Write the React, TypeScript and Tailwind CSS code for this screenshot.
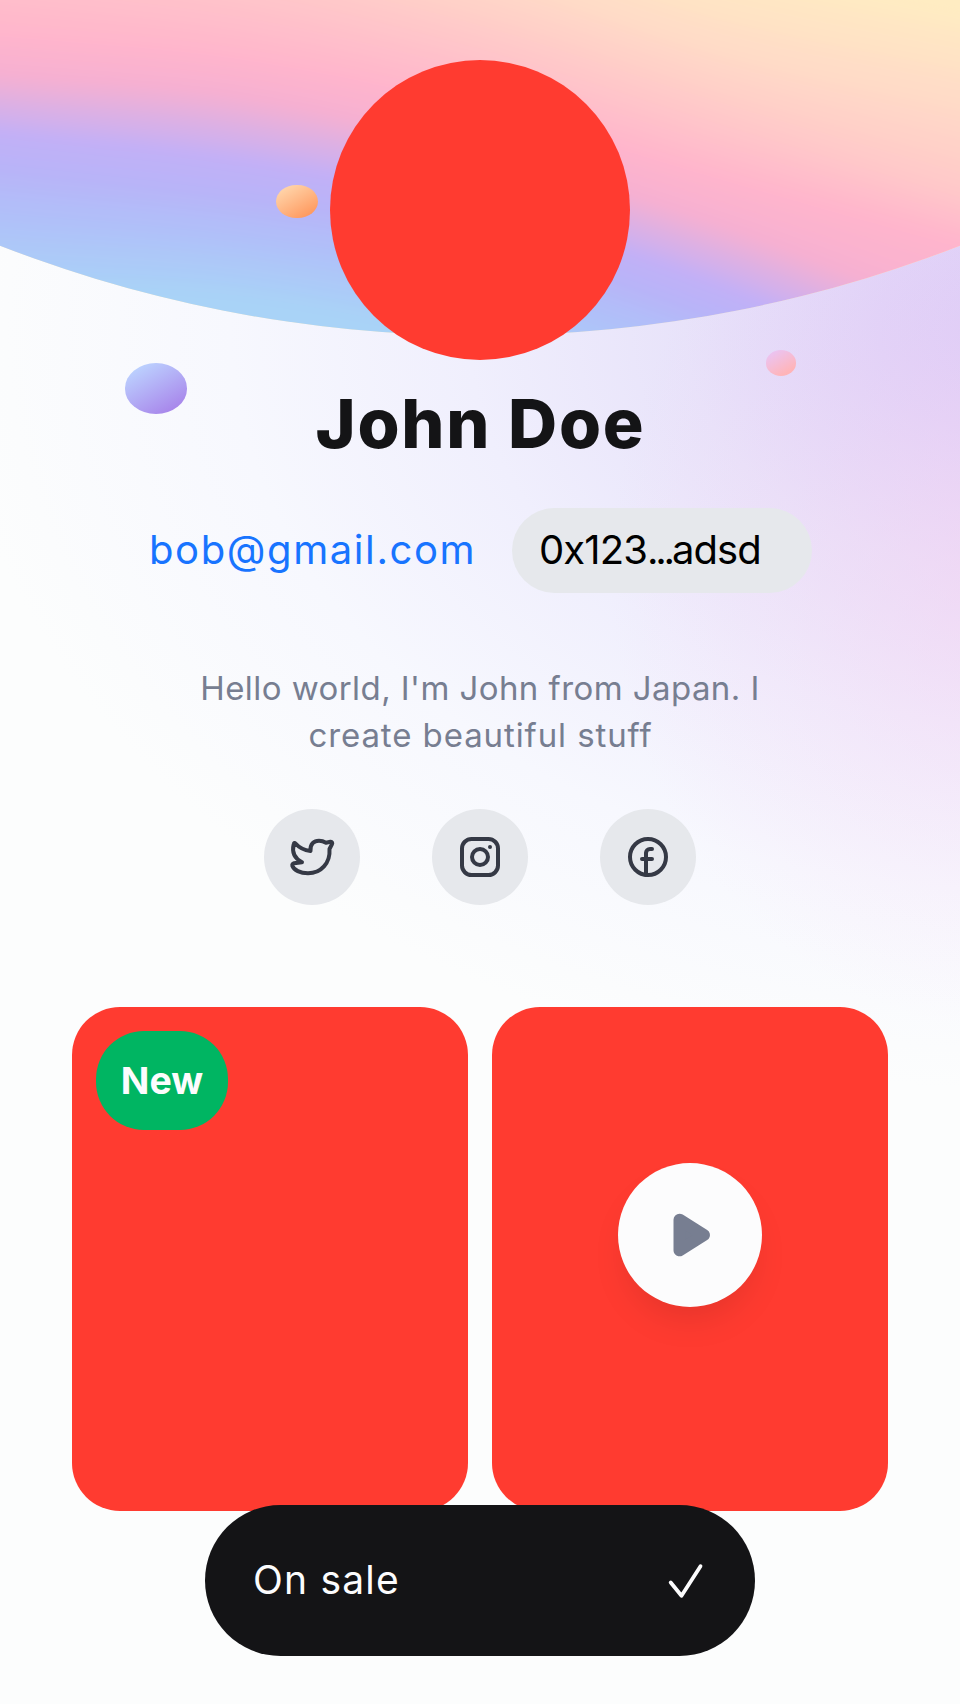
import React from "react";

type Band = { color: [number, number, number]; ys: number[] };

// Height of each colour contour at x = 0, 240, 480, 720 and 960.
const bands: Band[] = [
  { color: [255, 236, 194], ys: [-200, -160, -110, -45, 5] },
  { color: [255, 220, 199], ys: [-120, -85, -35, 42, 92] },
  { color: [255, 200, 201], ys: [-58, -22, 38, 115, 190] },
  { color: [255, 181, 204], ys: [33, 56, 105, 175, 240] },
  { color: [246, 176, 209], ys: [72, 94, 148, 222, 315] },
  { color: [194, 176, 247], ys: [132, 160, 207, 285, 390] },
  { color: [184, 180, 248], ys: [168, 196, 238, 317, 425] },
  { color: [176, 192, 249], ys: [213, 236, 278, 355, 460] },
  { color: [168, 212, 247], ys: [290, 302, 352, 435, 545] },
];

function contour(ys: number[]): string {
  const xs = [0, 240, 480, 720, 960];
  const slope = (i: number) => {
    const a = Math.max(0, i - 1);
    const b = Math.min(4, i + 1);
    return (ys[b] - ys[a]) / (xs[b] - xs[a]);
  };
  let d = `M-60 ${ys[0] - 60 * slope(0)} L0 ${ys[0]}`;
  for (let i = 0; i < 4; i++) {
    d += ` C${xs[i] + 80} ${ys[i] + 80 * slope(i)} ${xs[i + 1] - 80} ${ys[i + 1] - 80 * slope(i + 1)} ${xs[i + 1]} ${ys[i + 1]}`;
  }
  return `${d} L1020 ${ys[4] + 60 * slope(4)} V700 H-60 Z`;
}

const STEPS = 14;
const layers = bands.slice(0, -1).flatMap((band, i) => {
  const next = bands[i + 1];
  return Array.from({ length: STEPS }, (_, k) => {
    const t = k / STEPS;
    const rgb = band.color.map((c, j) => Math.round(c + (next.color[j] - c) * t));
    return {
      fill: `rgb(${rgb.join(",")})`,
      d: contour(band.ys.map((y, j) => y + (next.ys[j] - y) * t)),
    };
  });
});

function HeaderArt() {
  return (
    <svg className="absolute inset-x-0 top-0" width="960" height="340" viewBox="0 0 960 340" aria-hidden="true">
      <defs>
        <clipPath id="dome">
          <circle cx="480" cy="-989.3" r="1325" />
        </clipPath>
        <filter id="soften" x="-5%" y="-5%" width="110%" height="110%">
          <feGaussianBlur stdDeviation="5" />
        </filter>
      </defs>
      <g clipPath="url(#dome)">
        <rect width="960" height="340" fill="#ffecc2" />
        <g filter="url(#soften)">
          {layers.map((layer, i) => (
            <path key={i} d={layer.d} fill={layer.fill} />
          ))}
        </g>
      </g>
    </svg>
  );
}

function TwitterIcon() {
  return (
    <path d="M-16.5 -13.5C-13 -9.5 -8 -6.8 -1.5 -6C-2 -13 2 -16.3 7 -16.3C10 -16.3 12 -15.5 14 -14.3L18.5 -15.2C20 -15.4 20.6 -14 20 -12.8L17.5 -8C18.5 6 9 16.3 -4 16.3C-12 16.3 -18 13 -19.6 9C-20 7.5 -19.2 6.6 -18 6.3L-10 5.2C-18 1 -20 -6 -18.3 -12.8C-18 -14.3 -17.3 -14.4 -16.5 -13.5Z" />
  );
}

function InstagramIcon() {
  return (
    <>
      <rect x="-18" y="-18" width="36" height="36" rx="9.5" />
      <circle r="8" />
      <circle cx="10" cy="-10" r="2" fill="#353945" stroke="none" />
    </>
  );
}

function FacebookIcon() {
  return (
    <>
      <circle r="18" />
      <path d="M-2 18V-4A4 4 0 0 1 2 -8H4M-6 2H4" />
    </>
  );
}

function Social({ label, children }: { label: string; children: React.ReactNode }) {
  return (
    <button aria-label={label} className="flex size-24 items-center justify-center rounded-full bg-[#e6e8ec]">
      <svg width="48" height="48" viewBox="-24 -24 48 48" fill="none" stroke="#353945" strokeWidth="4" strokeLinecap="round" strokeLinejoin="round">
        {children}
      </svg>
    </button>
  );
}

export default function App() {
  return (
    <main
      className="relative h-[1704px] w-[960px] overflow-hidden bg-[#fcfdfd] bg-[radial-gradient(400px_460px_at_1010px_570px,rgba(246,206,240,0.55),rgba(246,206,240,0.22)_55%,rgba(246,206,240,0)),radial-gradient(1080px_760px_at_1030px_330px,#d8caf8_0%,#ded3f9_14%,#e8e3fa_32%,#f0effd_52%,#f7f8fe_74%,rgba(252,253,253,0)_100%)] font-['Inter',sans-serif]"
    >
      <HeaderArt />
      <i className="absolute top-[184.5px] left-[276px] h-[33.5px] w-[41.5px] rounded-[50%] bg-linear-150 from-[#ffd6ac] from-10% to-[#ff965a] to-90%" />
      <i className="absolute top-[363px] left-[125px] h-[50.5px] w-[62px] rounded-[50%] bg-linear-150 from-[#bcd4ff] from-10% to-[#a57de8] to-95%" />
      <i className="absolute top-[350px] left-[765.5px] h-[25.5px] w-[30.5px] rounded-[50%] bg-linear-150 from-[#eac4f4] from-10% to-[#ffb4b8] to-80%" />

      <div className="relative flex flex-col items-center pt-[60px]">
        <div className="size-[300px] rounded-full bg-[#ff3b30]" />
        <h1 className="mt-[23px] pl-px text-[68px] leading-20 font-extrabold tracking-[1.8px] whitespace-nowrap text-[#141416]">John Doe</h1>

        <div className="mt-[45px] flex h-[85px] w-[664px] items-center justify-between pl-[1px]">
          <a className="pb-px text-[40px] leading-12 tracking-[1.6px] whitespace-nowrap text-[#1874ff]">bob@gmail.com</a>
          <div className="flex h-[85px] w-[300px] items-center rounded-[43px] bg-[#e6e8ec] pb-px pl-[27px]">
            <span className="text-[40px] leading-12 tracking-[-0.9px] whitespace-nowrap text-black">
              0x123<span className="tracking-[-3.2px]">...</span>adsd
            </span>
          </div>
        </div>

        <p className="mt-[72px] text-center text-[33px] leading-[47px] whitespace-nowrap text-[#777e91]">
          <span className="tracking-[0.43px]">Hello world, I'm John from Japan. I</span>
          <br />
          <span className="pl-px tracking-[0.9px]">create beautiful stuff</span>
        </p>

        <div className="mt-[50px] flex gap-[72px]">
          <Social label="Twitter"><TwitterIcon /></Social>
          <Social label="Instagram"><InstagramIcon /></Social>
          <Social label="Facebook"><FacebookIcon /></Social>
        </div>

        <section className="mt-[102px] grid w-[816px] grid-cols-2 gap-6">
          <article className="h-[504px] rounded-[48px] bg-[#ff3b30] p-6">
            <div className="flex h-[98.5px] w-[132px] items-center justify-center rounded-[48px] bg-[#00b562] pt-0.5">
              <span className="text-[37.5px] leading-12 font-bold text-[#fcfcfd]">New</span>
            </div>
          </article>
          <article className="flex h-[504px] items-center justify-center rounded-[48px] bg-[#ff3b30] pb-12">
            <button aria-label="Play" className="flex size-36 items-center justify-center rounded-full bg-[#fcfcfd] shadow-[0_20px_40px_-14px_rgba(15,15,15,0.14)]">
              <svg width="48" height="48" viewBox="-24 -24 48 48" fill="#777e91" stroke="#777e91" strokeWidth="12" strokeLinejoin="round">
                <path d="M-10.5 -15.3L14 0L-10.5 15.3Z" />
              </svg>
            </button>
          </article>
        </section>
      </div>

      <nav className="absolute top-[1505px] left-[205px] flex h-[151px] w-[550px] items-center justify-between rounded-[76px] bg-[#141416] pr-[51px] pl-12">
        <span className="pb-px text-[39px] leading-12 tracking-[1.2px] text-[#fcfcfd]">On sale</span>
        <svg width="36" height="36" viewBox="0 0 36 36" fill="none" stroke="#fcfcfd" strokeWidth="3.8" strokeLinecap="round" strokeLinejoin="round">
          <path d="M2.7 19.5L13.5 32.8L32.5 3.2" />
        </svg>
      </nav>
    </main>
  );
}
